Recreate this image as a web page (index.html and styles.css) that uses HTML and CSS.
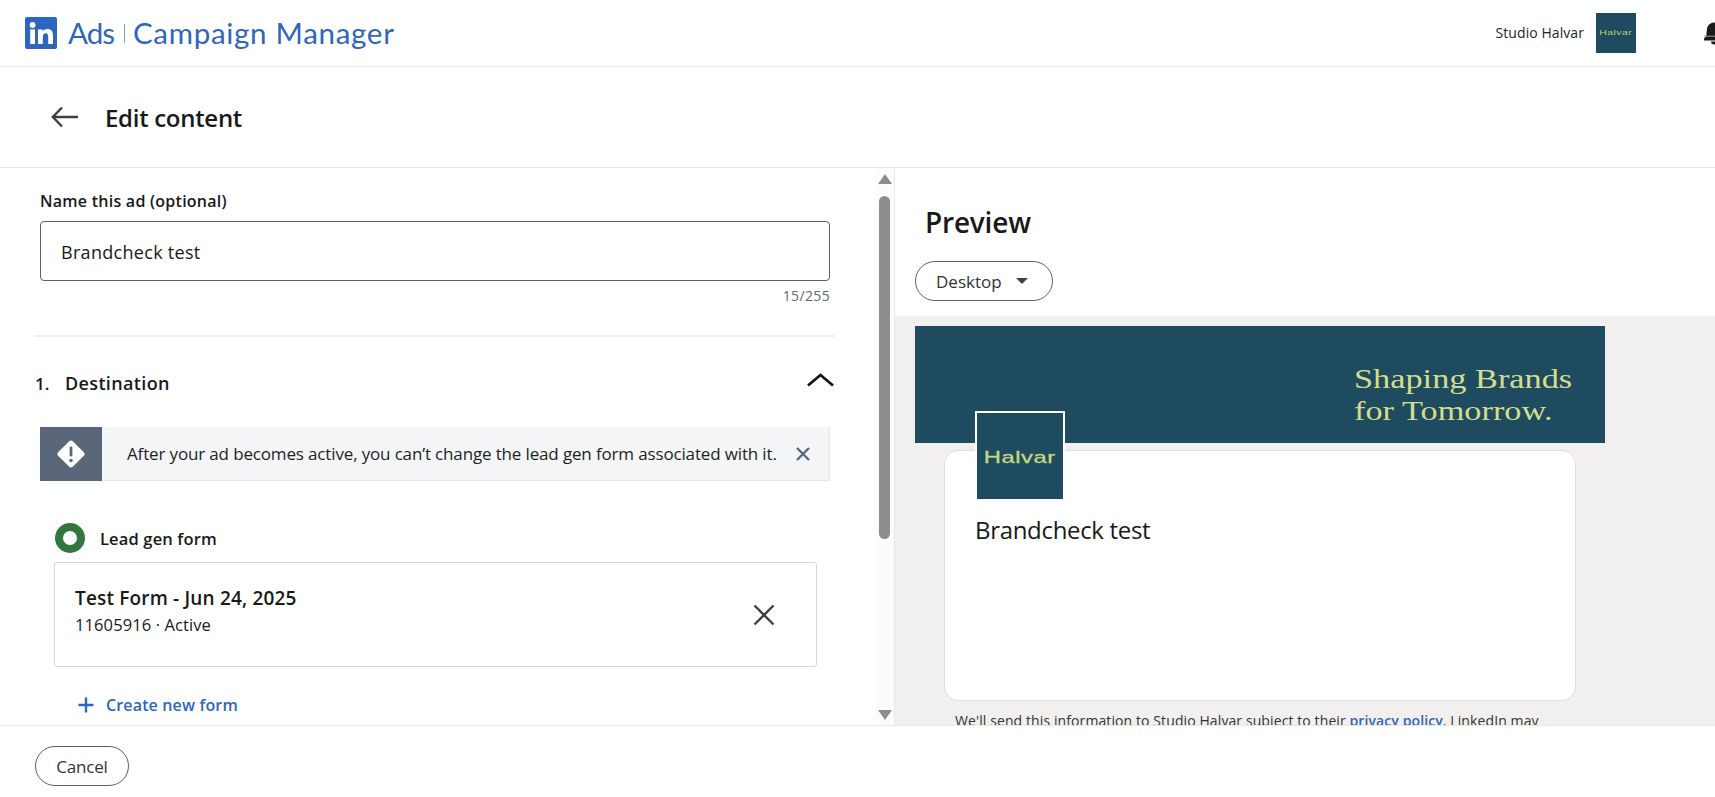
FILE: index.html
```html
<!DOCTYPE html>
<html lang="en">
<head>
<meta charset="utf-8">
<title>Edit content</title>
<link rel="stylesheet" href="styles.css">
</head>
<body>
<header class="topbar">
  <svg class="li-logo" viewBox="0 0 32 32"><rect width="32" height="32" rx="2" fill="#2e66bd"/><circle cx="7.6" cy="8" r="2.9" fill="#fff"/><rect x="5.2" y="12.4" width="4.8" height="14.6" fill="#fff"/><path d="M13 12.4h4.6v2c.8-1.4 2.5-2.4 4.6-2.4 4.4 0 5.8 2.7 5.8 6.8V27h-4.8v-7.3c0-2-.5-3.5-2.4-3.5-2 0-3 1.4-3 3.5V27H13z" fill="#fff"/></svg>
  <span class="brand brand-ads">Ads</span>
  <span class="brand-sep"></span>
  <span class="brand brand-name">Campaign Manager</span>
  <span class="account">Studio Halvar</span>
  <div class="avatar"><span class="avatar-word">Halvar</span></div>
  <svg class="bell" viewBox="0 0 24 24"><path d="M22 19.5H2v-1.6c0-.4.2-.8.5-1l1.7-1.4.7-7C5.3 4.4 8.3 1.500 12 1.500s6.700 2.900 7.100 6.500l.7 7 1.700 1.400c.3.2.5.6.5 1z" fill="#1a1a1a"/><path d="M2 15.200h20" stroke="#9a9a9a" stroke-width="1"/><path d="M9 20.500h6a3 3 0 0 1-6 0z" fill="#1a1a1a"/></svg>
</header>
<div class="subbar">
  <svg class="back" viewBox="0 0 28 22"><path d="M27 11H2M11 1.500 1.800 11l9.200 9.500" fill="none" stroke="#404040" stroke-width="2.400"/></svg>
  <h1 class="page-title">Edit content</h1>
</div>
<main class="workspace">
  <section class="editor">
    <div class="form">
      <label class="field-label">Name this ad (optional)</label>
      <div class="input">Brandcheck test</div>
      <div class="counter">15/255</div>
      <hr class="rule">
      <div class="section-head">
        <span class="section-num">1.</span>
        <span class="section-name">Destination</span>
        <svg class="chevron" viewBox="0 0 27 14"><path d="M1 12.500 13.500 2 26 12.500" fill="none" stroke="#111" stroke-width="2.600"/></svg>
      </div>
      <div class="notice">
        <div class="notice-icon"><svg viewBox="0 0 28 28"><path d="M14 .5c.8 0 1.500.3 2 .9l10.600 10.600a2.800 2.800 0 0 1 0 4L16 26.600a2.800 2.800 0 0 1-4 0L1.400 16a2.800 2.800 0 0 1 0-4L12 1.400c.5-.6 1.200-.9 2-.9z" fill="#fff"/><rect x="12.600" y="6.500" width="2.800" height="10" rx="1.200" fill="#5a6679"/><circle cx="14" cy="20.500" r="1.800" fill="#5a6679"/></svg></div>
        <p class="notice-text">After your ad becomes active, you can’t change the lead gen form associated with it.</p>
        <svg class="notice-close" viewBox="0 0 16 16"><path d="M2 2l12 12M14 2 2 14" fill="none" stroke="#56687a" stroke-width="2.400"/></svg>
      </div>
      <div class="radio-row">
        <span class="radio"></span>
        <span class="radio-label">Lead gen form</span>
      </div>
      <div class="form-card">
        <div class="form-info">
          <div class="form-name">Test Form - Jun 24, 2025</div>
          <div class="form-meta">11605916 · Active</div>
        </div>
        <svg class="form-remove" viewBox="0 0 22 22"><path d="M1.500 1.500l19 19M20.500 1.500l-19 19" fill="none" stroke="#404040" stroke-width="2.400"/></svg>
      </div>
      <div class="create-link">
        <svg class="plus" viewBox="0 0 16 16"><path d="M8 .5v15M.5 8h15" fill="none" stroke="#2e66bd" stroke-width="2.400"/></svg>
        <span>Create new form</span>
      </div>
    </div>
    <div class="scroll-track">
      <span class="arrow-up"></span>
      <span class="thumb"></span>
      <span class="arrow-down"></span>
    </div>
  </section>
  <section class="preview">
    <div class="preview-head">
      <h2 class="preview-title">Preview</h2>
      <div class="device-btn"><span>Desktop</span><span class="caret"></span></div>
    </div>
    <div class="stage">
      <div class="banner">
        <div class="tagline"><span>Shaping Brands</span><span>for Tomorrow.</span></div>
      </div>
      <div class="ad-card">
        <div class="ad-logo"><span class="ad-logo-word">Halvar</span></div>
        <div class="ad-name">Brandcheck test</div>
      </div>
      <p class="legal">We'll send this information to Studio Halvar subject to their <a class="legal-link">privacy policy</a>. LinkedIn may</p>
    </div>
  </section>
</main>
<footer class="footbar">
  <div class="cancel">Cancel</div>
</footer>
</body>
</html>
```

FILE: styles.css
```css
* { box-sizing: border-box; }
html, body { margin: 0; height: 100%; }
body {
  height: 797px;
  overflow: hidden;
  display: flex;
  flex-direction: column;
  background: #fff;
  color: #191919;
  font-family: "Open Sans", "Noto Sans", sans-serif;
}
.topbar {
  height: 67px;
  flex: none;
  display: flex;
  align-items: center;
  padding: 0 0 1px 25px;
  border-bottom: 1px solid #e9e9e9;
  overflow: hidden;
}
.li-logo { width: 32px; height: 32px; flex: none; margin-right: 11px; }
.brand { font-family: Lato, sans-serif; font-size: 29.500px; color: #2e66bd; white-space: nowrap; }
.brand-ads { letter-spacing: -1px; }
.brand-name { letter-spacing: .7px; }
.brand-sep { width: 1px; height: 19px; background: #7d9fd6; margin: 2px 8px 0 10px; }
.account { margin-left: auto; font-size: 14px; letter-spacing: .07px; margin-right: 12px; color: #1f1f1f; }
.avatar {
  width: 40px; height: 40px; flex: none;
  background: #1f4b60;
  display: flex; align-items: center; justify-content: center;
  margin-right: 66px;
}
.avatar-word { font-family: "Liberation Sans", sans-serif; font-size: 7.500px; color: #b9cc7c; letter-spacing: .3px; transform: scaleX(1.400); }
.bell { width: 24px; height: 24px; flex: none; margin-right: -11px; }
.subbar {
  height: 101px;
  flex: none;
  display: flex;
  align-items: center;
  padding-left: 51px;
  border-bottom: 1px solid #e9e9e9;
}
.back { width: 28px; height: 22px; flex: none; margin-right: 26px; }
.page-title { margin: 0; font-size: 24px; font-weight: 600; letter-spacing: -.3px; }
.workspace { flex: 1; min-height: 0; display: flex; overflow: hidden; }
.editor { width: 895px; flex: none; display: flex; border-right: 1px solid #e9e9e9; }
.form { width: 875px; flex: none; padding: 22px 0 0 35px; }
.field-label { display: block; margin-left: 5px; font-size: 16px; font-weight: 600; line-height: 22px; letter-spacing: .25px; }
.input {
  width: 790px; height: 60px; margin: 9px 0 0 5px;
  border: 1px solid #5e5e5e; border-radius: 4px;
  padding: 2px 0 0 20px;
  display: flex; align-items: center;
  font-size: 18px; letter-spacing: .3px;
}
.counter { width: 795px; text-align: right; margin-top: 6px; font-size: 14px; line-height: 18px; color: #666; letter-spacing: .35px; }
.rule { width: 800px; height: 2px; margin: 30px 0 0; border: 0; background: #eeeeee; }
.section-head { width: 800px; display: flex; align-items: center; height: 90px; }
.section-num { width: 30px; font-size: 17px; font-weight: 600; padding-top: 2px; }
.section-name { font-size: 18px; font-weight: 600; letter-spacing: .35px; padding-top: 2px; }
.chevron { width: 27px; height: 14px; margin-left: auto; margin-right: 1px; margin-top: -4px; }
.notice {
  width: 790px; height: 54px; margin-left: 5px;
  display: flex; align-items: center;
  background: #f4f5f7;
  border-bottom: 1px solid #e6e7e9;
  border-right: 1px solid #e6e7e9;
}
.notice-icon { width: 62px; height: 54px; flex: none; background: #5a6679; display: flex; align-items: center; justify-content: center; }
.notice-icon svg { width: 28px; height: 28px; }
.notice-text { margin: 0 0 0 25px; font-size: 17px; letter-spacing: -.15px; white-space: nowrap; color: #1f1f1f; }
.notice-close { width: 16px; height: 16px; flex: none; margin-left: 18px; }
.radio-row { display: flex; align-items: center; margin: 42px 0 0 20px; height: 30px; }
.radio { width: 30px; height: 30px; border-radius: 50%; border: 8px solid #33763f; background: #fff; flex: none; }
.radio-label { margin-left: 15px; font-size: 16.500px; font-weight: 600; letter-spacing: .15px; }
.form-card {
  width: 763px; height: 105px; margin: 9px 0 0 19px;
  border: 1px solid #d6d6d6; border-radius: 3px; border-width: 1.500px;
  display: flex; align-items: center;
  padding: 0 41px 0 20px;
}
.form-info { flex: 1; margin-top: -8px; }
.form-name { font-size: 19px; font-weight: 600; line-height: 26px; letter-spacing: .17px; }
.form-meta { font-size: 16.500px; line-height: 24px; letter-spacing: .1px; margin-top: 2px; }
.form-remove { width: 22px; height: 22px; flex: none; }
.create-link { display: flex; align-items: center; margin: 25px 0 0 43px; color: #2e66bd; font-size: 16px; font-weight: 600; letter-spacing: .15px; height: 26px; }
.plus { width: 16px; height: 16px; margin-right: 12px; }
.scroll-track { width: 19px; flex: none; background: #fcfcfc; display: flex; flex-direction: column; align-items: center; padding: 6px 0 5px; }
.arrow-up, .arrow-down { width: 0; height: 0; border-left: 7px solid transparent; border-right: 7px solid transparent; }
.arrow-up { border-bottom: 10px solid #8d8d8d; }
.arrow-down { border-top: 10px solid #8d8d8d; margin-top: auto; }
.thumb { width: 11px; height: 343px; margin-top: 12px; background: #8d8d8d; border-radius: 6px; }
.preview { flex: 1; min-width: 0; display: flex; flex-direction: column; overflow: hidden; }
.preview-head { height: 148px; flex: none; padding: 34px 0 0 20px; }
.preview-title { margin: 0 0 0 10px; font-size: 28px; line-height: 40px; font-weight: 600; letter-spacing: -.2px; }
.device-btn {
  width: 138px; height: 40px; margin-top: 19px;
  border: 1px solid #5e5e5e; border-radius: 20px;
  display: flex; align-items: center; padding-left: 20px;
  font-size: 17px; font-weight: 500; color: #333;
}
.caret { width: 0; height: 0; margin-left: 14px; border-left: 6.500px solid transparent; border-right: 6.500px solid transparent; border-top: 6.500px solid #404040; }
.stage { flex: 1; background: #f1f0ee; padding: 10px 0 0 20px; overflow: hidden; }
.banner { width: 690px; height: 117px; background: #1f4b60; padding: 37px 0 0 439px; }
.tagline { display: flex; flex-direction: column; font-family: "Liberation Serif", serif; font-size: 28px; line-height: 32px; color: #d3dd8b; transform: scaleX(1.225); transform-origin: left top; white-space: nowrap; }
.ad-card {
  width: 632px; height: 251px; margin: 7px 0 0 29px;
  background: #fff; border: 1.500px solid #e0dfdc; border-radius: 14px;
  padding-left: 30px;
}
.ad-logo {
  width: 90px; height: 90px; margin-top: -40px;
  background: #1f4b60; border: 2px solid #fff;
  display: flex; align-items: center; justify-content: center;
  padding-top: 4px;
}
.ad-logo-word { font-family: "Liberation Sans", sans-serif; font-size: 17px; color: #c5d77f; letter-spacing: .4px; transform: scaleX(1.400); -webkit-text-stroke: .3px #c5d77f; }
.ad-name { margin-top: 13px; font-size: 24px; line-height: 32px; letter-spacing: -.32px; }
.legal { margin: 10px 0 0 40px; font-size: 14px; line-height: 20px; letter-spacing: .1px; color: #333; white-space: nowrap; }
.legal-link { color: #2e66bd; font-weight: 600; }
.footbar { height: 72px; flex: none; border-top: 1px solid #e9e9e9; padding: 20px 0 0 35px; }
.cancel {
  width: 94px; height: 40px;
  border: 1px solid #5e5e5e; border-radius: 20px;
  display: flex; align-items: center; justify-content: center;
  font-size: 17px; color: #333; font-weight: 500; letter-spacing: -.2px;
}
```
